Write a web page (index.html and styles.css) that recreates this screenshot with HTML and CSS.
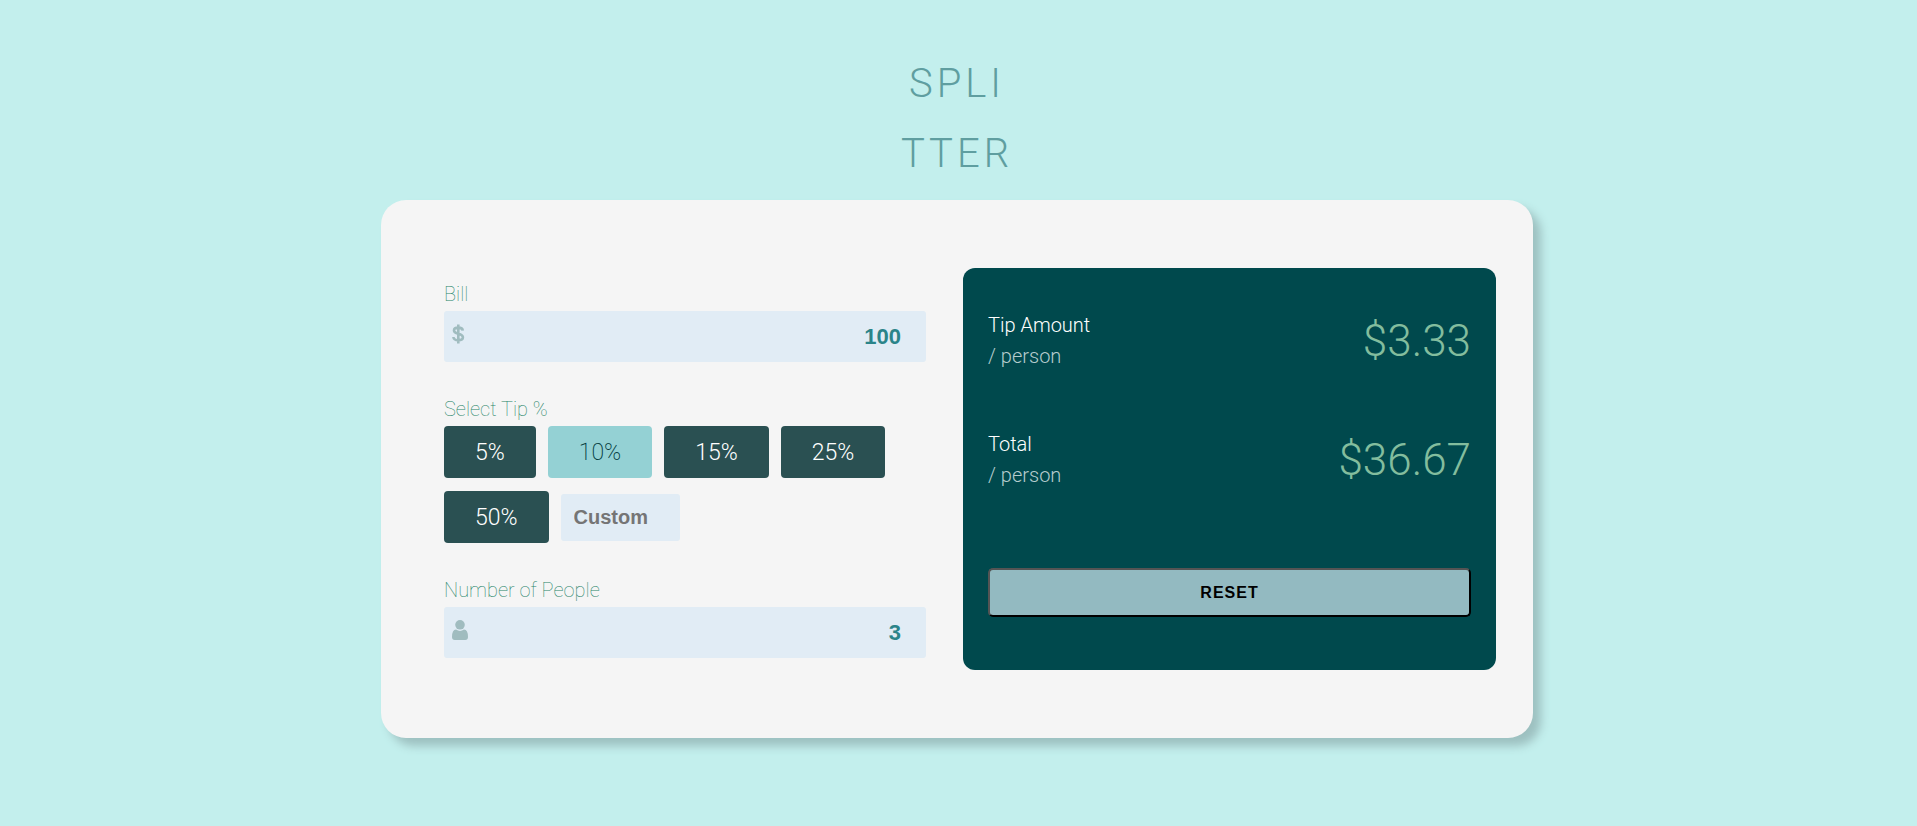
FILE: index.html
```html
<!DOCTYPE html>
<html lang="en">
<head>
<meta charset="utf-8">
<meta name="viewport" content="width=device-width, initial-scale=1">
<title>Splitter</title>
<link rel="stylesheet" href="styles.css">
</head>
<body>
<h1 class="title">SPLI<br>TTER</h1>
<main class="card">
  <form class="form">
    <div class="group">
      <label class="label" for="bill">Bill</label>
      <div class="field">
        <svg class="icon" viewBox="0 0 16 20" aria-hidden="true"><path d="M10.800 6.600C10.600 4.700 9 3.600 6.300 3.600C3.600 3.600 2 4.600 2 6.400C2 8.500 3.900 9.100 6.300 9.700C9.100 10.400 10.900 11.200 10.900 13.300C10.900 15.300 9 16.300 6.300 16.300C3.500 16.300 1.600 15.200 1.400 13M6.300 .5V19.500" fill="none" stroke="currentColor" stroke-width="2.600"/></svg>
        <input class="input" id="bill" type="text" inputmode="decimal" value="100">
      </div>
    </div>
    <div class="group">
      <span class="label" id="tip-label">Select Tip %</span>
      <div class="tips" role="group" aria-labelledby="tip-label">
        <button class="tip" type="button">5%</button>
        <button class="tip tip-active" type="button">10%</button>
        <button class="tip" type="button">15%</button>
        <button class="tip" type="button">25%</button>
        <button class="tip" type="button">50%</button>
        <input class="custom" type="text" inputmode="decimal" placeholder="Custom" aria-label="Custom tip">
      </div>
    </div>
    <div class="group">
      <label class="label" for="people">Number of People</label>
      <div class="field">
        <svg class="icon" viewBox="0 0 16 20" aria-hidden="true"><circle cx="8" cy="4.800" r="4.800" fill="currentColor"/><path d="M4 9.600Q8 12.400 12 9.600Q16 10 16 17Q16 20 13.200 20H2.800Q0 20 0 17Q0 10 4 9.600Z" fill="currentColor"/></svg>
        <input class="input" id="people" type="text" inputmode="numeric" value="3">
      </div>
    </div>
  </form>
  <section class="panel">
    <div class="result">
      <p class="name">Tip Amount<br><span class="per">/ person</span></p>
      <output class="amount">$3.33</output>
    </div>
    <div class="result">
      <p class="name">Total<br><span class="per">/ person</span></p>
      <output class="amount">$36.67</output>
    </div>
    <button class="reset" type="button">RESET</button>
  </section>
</main>
</body>
</html>
```
FILE: styles.css
```css
* {
  box-sizing: border-box;
}

body {
  margin: 0;
  padding: 49px 3px 48px 0;
  background: #c3efed;
  font-family: Roboto, sans-serif;
  font-size: 20px;
}

.title {
  margin: 0 0 11px;
  color: #5f9ea0;
  font-size: 40px;
  font-weight: 300;
  line-height: 70px;
  letter-spacing: 4px;
  text-align: center;
}

.card {
  display: grid;
  grid-template-columns: 482fr 533fr;
  gap: 37px;
  max-width: 1152px;
  margin: 0 auto;
  padding: 68px 37px 68px 63px;
  border-radius: 25px;
  background: #f5f5f5;
  box-shadow: 8px 8px 10px #9dc0c0;
}

.form {
  display: flex;
  flex-direction: column;
  gap: 32px;
  padding: 11px 0 12px;
}

.group {
  display: flex;
  flex-direction: column;
}

.label {
  margin-bottom: 2px;
  color: #1f8468;
  font-weight: 100;
  line-height: 30px;
}

.field {
  display: flex;
  align-items: center;
  padding: 0 25px 0 8px;
  border-radius: 3px;
  background: #e1ecf5;
}

.icon {
  flex: none;
  width: 16px;
  height: 20px;
  margin-bottom: 6px;
  color: #a0bcbf;
}

.input {
  flex: 1;
  min-width: 0;
  height: 51px;
  padding: 0;
  border: 0;
  background: none;
  color: #2b8489;
  font: bold 22px "Liberation Sans", Arial, sans-serif;
  text-align: right;
}

.tips {
  display: flex;
  flex-wrap: wrap;
  align-items: center;
  gap: 13px 12px;
}

.tip {
  height: 52px;
  padding: 0 31px;
  border: 0;
  border-radius: 4px;
  background: #2a5052;
  color: #fff;
  font: 300 23px Roboto, sans-serif;
}

.tip-active {
  background: #94d1d4;
  color: #00383b;
  font-weight: 200;
}

.custom {
  width: 119px;
  height: 47px;
  padding: 0 13px;
  border: 0;
  border-radius: 3px;
  background: #e1ecf5;
  font: bold 20px "Liberation Sans", Arial, sans-serif;
}

.custom::placeholder {
  color: #757575;
}

.panel {
  display: flex;
  flex-direction: column;
  padding: 42px 25px 53px;
  border-radius: 12px;
  background: #00494d;
}

.result {
  display: flex;
  justify-content: space-between;
  margin-bottom: 57px;
}

.name {
  margin: 0;
  color: #fff;
  font-weight: 300;
  line-height: 31px;
}

.per {
  color: #b5cccd;
}

.amount {
  color: #83bd9e;
  font-size: 44px;
  font-weight: 300;
  line-height: 62px;
}

.reset {
  height: 49px;
  margin-top: auto;
  border: 2px outset #000;
  border-radius: 5px;
  background: #93bac1;
  color: #000;
  font: bold 16px "Liberation Sans", Arial, sans-serif;
  letter-spacing: 1px;
}
```
